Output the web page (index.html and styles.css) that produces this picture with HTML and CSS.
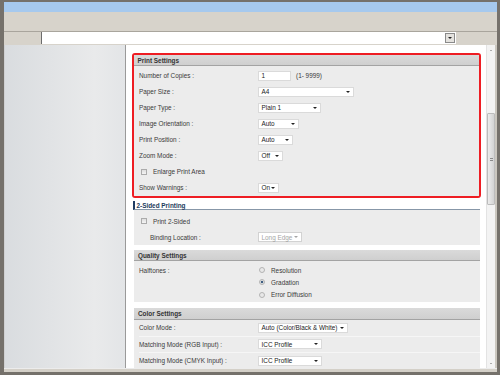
FILE: index.html
```html
<!DOCTYPE html>
<html lang="en">
<head>
  <meta charset="UTF-8">
  <title>Print Settings</title>
  <link rel="stylesheet" href="styles.css">
</head>
<body>

<div class="window">
  <div class="titlebar"></div>
  <div class="toolbar"></div>
  <div class="addressbar">
    <div class="combo"><span class="combo-btn"><span class="arrow"></span></span></div>
  </div>

  <div class="main">
    <div class="sidebar"></div>

    <div class="content">
      <div class="highlight">
        <div class="group">
          <div class="group-head">Print Settings</div>
          <div class="group-body print-body">
            <div class="row">
              <span class="label">Number of Copies :</span>
              <span class="field w33">1</span>
              <span class="hint">(1- 9999)</span>
            </div>
            <div class="row">
              <span class="label">Paper Size :</span>
              <span class="field select w96">A4<span class="arrow"></span></span>
            </div>
            <div class="row">
              <span class="label">Paper Type :</span>
              <span class="field select w63">Plain 1<span class="arrow"></span></span>
            </div>
            <div class="row">
              <span class="label">Image Orientation :</span>
              <span class="field select w41">Auto<span class="arrow"></span></span>
            </div>
            <div class="row">
              <span class="label">Print Position :</span>
              <span class="field select w35">Auto<span class="arrow"></span></span>
            </div>
            <div class="row">
              <span class="label">Zoom Mode :</span>
              <span class="field select w25">Off<span class="arrow"></span></span>
            </div>
            <div class="row">
              <span class="check"></span>
              <span>Enlarge Print Area</span>
            </div>
            <div class="row">
              <span class="label">Show Warnings :</span>
              <span class="field select w21">On<span class="arrow"></span></span>
            </div>
          </div>
        </div>
      </div>

      <div class="group active">
        <div class="group-head">2-Sided Printing</div>
        <div class="group-body duplex-body">
          <div class="row">
            <span class="check"></span>
            <span>Print 2-Sided</span>
          </div>
          <div class="row">
            <span class="label indent">Binding Location :</span>
            <span class="field select disabled w44">Long Edge<span class="arrow"></span></span>
          </div>
        </div>
      </div>

      <div class="group">
        <div class="group-head">Quality Settings</div>
        <div class="group-body quality-body">
          <div class="row-top">
            <span class="label">Halftones :</span>
            <div class="radios">
              <div class="radio-line"><span class="radio"></span>Resolution</div>
              <div class="radio-line"><span class="radio on"></span>Gradation</div>
              <div class="radio-line"><span class="radio"></span>Error Diffusion</div>
            </div>
          </div>
        </div>
      </div>

      <div class="group">
        <div class="group-head color-head">Color Settings</div>
        <div class="group-body color-body">
          <div class="row">
            <span class="label">Color Mode :</span>
            <span class="field select w90">Auto (Color/Black &amp; White)<span class="arrow"></span></span>
          </div>
          <div class="row">
            <span class="label">Matching Mode (RGB Input) :</span>
            <span class="field select w64">ICC Profile<span class="arrow"></span></span>
          </div>
          <div class="row">
            <span class="label">Matching Mode (CMYK Input) :</span>
            <span class="field select w64">ICC Profile<span class="arrow"></span></span>
          </div>
        </div>
      </div>
    </div>

    <div class="scrollbar">
      <div class="sb-btn"><span class="sb-up"></span></div>
      <div class="sb-gap"></div>
      <div class="sb-thumb"><span class="grip"></span></div>
      <div class="sb-rest"></div>
      <div class="sb-btn"><span class="sb-down"></span></div>
    </div>
  </div>

  <div class="statusbar"></div>
</div>

</body>
</html>
```

FILE: styles.css
```css
* {
  box-sizing: border-box;
}

body {
  margin: 0;
  font-family: "Liberation Sans", Arial, sans-serif;
  font-size: 6.4px;
  color: #3a3a3a;
  background: #75716b;
}

.window {
  width: 500px;
  height: 375px;
  padding: 2px 3px 3px 4px;
  background: #75716b;
  display: flex;
  flex-direction: column;
  overflow: hidden;
}

.titlebar {
  height: 10px;
  background: #a6c9ee;
}

.toolbar {
  height: 20px;
  background: #d7d3cb;
  border-bottom: 1px solid #a9a59d;
}

.addressbar {
  height: 13px;
  background: #d7d3cb;
  padding-left: 37px;
}

.combo {
  width: 415px;
  height: 12px;
  background: white;
  border-left: 1px solid #6c6c6c;
  display: flex;
  justify-content: flex-end;
  align-items: center;
}

.combo-btn {
  width: 10px;
  height: 10px;
  margin-right: 1px;
  background: #e4e2de;
  border: 1px solid #8a8a8a;
  display: flex;
  align-items: center;
  justify-content: center;
}

.arrow {
  width: 0;
  height: 0;
  border-left: 2px solid transparent;
  border-right: 2px solid transparent;
  border-top: 2px solid #222;
}

.main {
  height: 323px;
  display: flex;
}

.sidebar {
  width: 122px;
  flex: none;
  border-left: 1px solid #cfd0d1;
  border-right: 1px solid #9a9a9a;
  background: linear-gradient(to right, #d9dcdf, #e9eaeb 75%, #e3e5e7);
}

.content {
  width: 360px;
  flex: none;
  background: white;
  padding: 8px 5px 0 6px;
  overflow: hidden;
}

.highlight {
  width: 349px;
  border: 2px solid #ee1d23;
  border-radius: 3px;
  overflow: hidden;
}

.group {
  margin: 0 1px 0 2px;
}

.highlight .group {
  margin: 0;
}

.group-head {
  height: 11px;
  padding-left: 4px;
  background: linear-gradient(#dadada, #cfcfcf);
  border-bottom: 1px solid #a3a3a3;
  font-weight: bold;
  color: #333;
  display: flex;
  align-items: center;
}

.highlight .group-head {
  padding-left: 3.5px;
}

.group-body {
  background: #ececec;
  padding-left: 5px;
}

.row {
  height: 16px;
  display: flex;
  align-items: center;
}

.label {
  width: 119px;
  flex: none;
}

.label.indent {
  padding-left: 11px;
}

.field {
  height: 10px;
  background: white;
  border: 1px solid #dadada;
  padding: 0 3px 0 2.5px;
  display: flex;
  align-items: center;
  justify-content: space-between;
  color: #222;
  white-space: nowrap;
}

.hint {
  margin-left: 5px;
}

.select.disabled {
  color: #a5a5a5;
  border-color: #d2d2d2;
}

.select.disabled .arrow {
  border-top-color: #a5a5a5;
}

.w21 { width: 21px; }
.w25 { width: 25px; }
.w33 { width: 33px; }
.w35 { width: 35px; }
.w41 { width: 41px; }
.w44 { width: 44px; }
.w63 { width: 63px; }
.w64 { width: 64px; }
.w90 { width: 90px; }
.w96 { width: 96px; }

.check {
  width: 6px;
  height: 6px;
  margin: 0 6px 0 2px;
  border: 1px solid #ababab;
  background: linear-gradient(#dedede, #f4f4f4);
}

.print-body {
  padding-top: 1.6px;
}

.active .group-head {
  height: 9px;
  margin-top: 3.5px;
  margin-left: -1px;
  padding-left: 1.5px;
  background: white;
  border-left: 2px solid #1f3b63;
  border-bottom: 1px solid #8797a8;
  color: #223b5c;
}

.duplex-body {
  height: 35px;
  padding-top: 3px;
}

.group + .group,
.highlight + .group {
  margin-top: 0;
}

.quality-body {
  margin-bottom: 0;
  padding: 3px 0 1px 5px;
}

.group:nth-of-type(3) {
  margin-top: 5px;
}

.row-top {
  display: flex;
}

.row-top .label {
  height: 12px;
  display: flex;
  align-items: center;
}

.radios {
  display: flex;
  flex-direction: column;
}

.radio-line {
  height: 12.2px;
  display: flex;
  align-items: center;
  padding-left: 0.5px;
}

.radio {
  width: 6px;
  height: 6px;
  border-radius: 50%;
  border: 1px solid #b3b3b3;
  background: #e8e8e8;
  margin-right: 6.5px;
}

.radio.on {
  background: radial-gradient(circle, #3d5d80 0 1.4px, #e8e8e8 1.6px);
}

.color-head {
  height: 12px;
  margin-top: 6px;
}

.color-body .row {
  height: 16.2px;
  border-top: 1px solid #f6f6f6;
}

.color-body .row:first-child {
  border-top: none;
}

.scrollbar {
  width: 11px;
  flex: none;
  background: #f3f3f3;
  border-left: 1px solid #e3e3e3;
  border-right: 2px solid #cbc7bf;
  display: flex;
  flex-direction: column;
}

.sb-btn {
  height: 10px;
  display: flex;
  align-items: center;
  justify-content: center;
}

.sb-up {
  border-left: 1.5px solid transparent;
  border-right: 1.5px solid transparent;
  border-bottom: 1.5px solid #666;
}

.sb-down {
  border-left: 1.5px solid transparent;
  border-right: 1.5px solid transparent;
  border-top: 1.5px solid #666;
}

.sb-gap {
  height: 58px;
}

.sb-thumb {
  height: 92px;
  border: 1px solid #bcbcbc;
  border-radius: 1px;
  background: linear-gradient(to right, #ececec, #d3d3d3);
  display: flex;
  align-items: center;
  justify-content: center;
}

.grip {
  width: 3px;
  height: 3px;
  border-top: 1px solid #8a8a8a;
  border-bottom: 1px solid #8a8a8a;
}

.sb-rest {
  flex: 1;
}

.statusbar {
  height: 4px;
  background: #d4d0c8;
  border-top: 1px solid #ececec;
}
```
